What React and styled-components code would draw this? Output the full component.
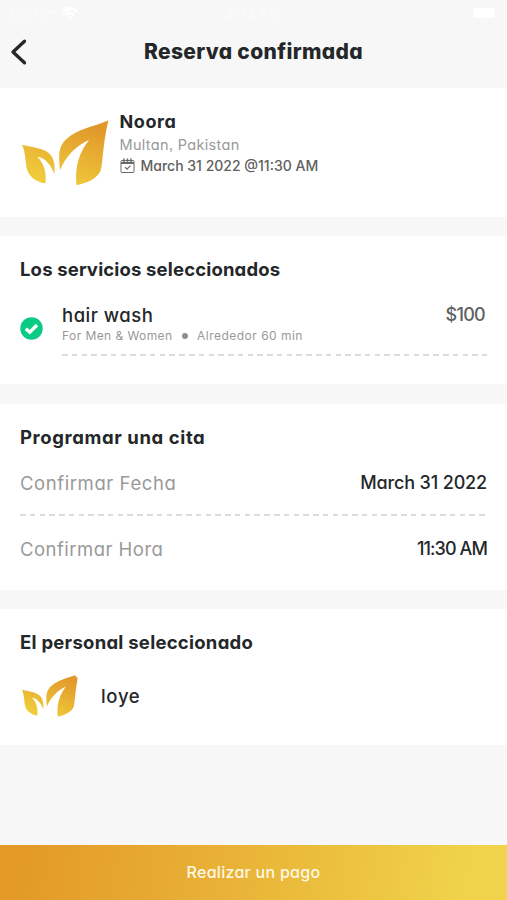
import React from "react";
import styled, { createGlobalStyle } from "styled-components";

const GlobalStyle = createGlobalStyle`
  * {
    box-sizing: border-box;
  }

  body {
    margin: 0;
    background: #f7f7f7;
    font-family: Inter, "Open Sans", sans-serif;
    font-feature-settings: "cv11", "ss03";
    color: #242729;
  }
`;

const Page = styled.div`
  display: flex;
  flex-direction: column;
  height: 900px;
`;

const StatusBar = styled.div`
  display: grid;
  grid-template-columns: 1fr auto 1fr;
  align-items: center;
  height: 26px;
  padding: 0 10px;
  font-size: 13px;
  font-weight: 500;
  letter-spacing: 0.4px;
  color: #fbfbfb;
`;

const Carrier = styled.div`
  display: flex;
  align-items: center;
  gap: 4px;
`;

const Battery = styled.div`
  justify-self: end;
  width: 22px;
  height: 10px;
  margin-right: 2px;
  border-radius: 2px;
  background: #fff;
`;

const Header = styled.header`
  display: grid;
  grid-template-columns: 40px 1fr 40px;
  align-items: center;
  height: 62px;
  padding-bottom: 10px;
`;

const BackIcon = styled.svg`
  width: 18px;
  height: 28px;
  margin-left: 10px;
`;

const Title = styled.h1`
  margin: 0;
  font-size: 21px;
  font-weight: 800;
  line-height: 26px;
  letter-spacing: 0.35px;
  text-align: center;
`;

const Card = styled.section`
  flex: none;
  height: ${props => props.$height}px;
  margin-bottom: ${props => props.$gap}px;
  padding: 21px 20px 0;
  background: #fff;
`;

const Salon = styled.div`
  display: flex;
  padding: 1px 0 0 2px;
`;

const SalonLogo = styled.svg`
  width: 87px;
  height: 66px;
  margin: 10px 10.5px 0 0;
`;

const Line = styled.div`
  font-size: ${props => props.$size || 18}px;
  font-weight: ${props => props.$weight || 500};
  line-height: ${props => props.$height || 24}px;
  letter-spacing: ${props => props.$spacing || 0}px;
  color: ${props => props.$color || "#242729"};
  white-space: nowrap;
`;

const DateLine = styled(Line)`
  display: flex;
  align-items: center;
  gap: 6px;
`;

const SectionTitle = styled.h2`
  margin: 0;
  font-size: 18.5px;
  font-weight: 700;
  line-height: 25px;
  letter-spacing: ${props => props.$spacing}px;
`;

const Service = styled.div`
  display: grid;
  grid-template-columns: 42px 1fr auto;
  margin-top: 21px;
`;

const Price = styled(Line)`
  margin-right: 2px;
`;

const CheckIcon = styled.svg`
  width: 23px;
  height: 23px;
  margin-top: 14px;
`;

const Details = styled.div`
  display: flex;
  align-items: center;
`;

const Dot = styled.span`
  width: 6px;
  height: 6px;
  margin: 0 9.5px 0 9px;
  border-radius: 50%;
  background: #8e8e8e;
`;

const Dashes = styled.div`
  height: 2px;
  margin: ${props => props.$margin};
  background: repeating-linear-gradient(
    to right,
    #dcdcdc 0 5.5px,
    transparent 5.5px 9.77px
  );
`;

const Row = styled.div`
  display: flex;
  justify-content: space-between;
  padding-top: ${props => props.$top || 0}px;
`;

const Staff = styled.div`
  display: flex;
  align-items: center;
  gap: 22px;
  margin: 20px 0 0 2px;
`;

const StaffLogo = styled.svg`
  width: 57px;
  height: 42px;
`;

const PayButton = styled.button`
  height: 55px;
  margin-top: auto;
  padding: 0 0 2px;
  border: 0;
  background: linear-gradient(100deg, #e39a27 5%, #e9b236 45%, #f0d34b 92%);
  font: 500 16px/24px Inter, sans-serif;
  font-feature-settings: inherit;
  letter-spacing: 0.28px;
  color: #fff8e6;
`;

const Leaves = ({ id }) => (
  <>
    <defs>
      <linearGradient
        id={id}
        gradientUnits="userSpaceOnUse"
        x1="200"
        y1="30"
        x2="130"
        y2="220"
      >
        <stop offset="0" stopColor="#e2992b" />
        <stop offset="1" stopColor="#f0cd3c" />
      </linearGradient>
    </defs>
    <g fill={`url(#${id})`}>
      <path d="M12 90C36 97 64 98 84 110C104 122 112 142 109 178C101 158 84 128 57 126C76 143 86 172 82 206C58 203 35 190 27 165C21 144 23 116 12 90Z" />
      <path d="M271 17C238 33 195 39 160 61C128 82 123 103 123 130C123 143 124 155 126 167C139 130 171 94 213 75C184 111 169 155 175 212C207 205 239 191 248 166C255 140 254 84 271 17Z" />
    </g>
  </>
);

export default function App() {
  return (
    <>
      <GlobalStyle />
      <Page>
        <StatusBar>
          <Carrier>
            Carrier
            <svg width="18" height="14" viewBox="0 0 18 14" fill="#fff">
              <path d="M1 5Q9-3 17 5L15 7Q9 1 3 7ZM4 8Q9 3 14 8L12 10Q9 7 6 10ZM7 11Q9 9 11 11L9 13Z" />
            </svg>
          </Carrier>
          <span>2:42 PM</span>
          <Battery />
        </StatusBar>

        <Header>
          <BackIcon viewBox="0 0 18 28" fill="none">
            <path
              d="M14.5 3.2L3 14L14.5 24.8"
              stroke="#242729"
              strokeWidth="3.3"
              strokeLinecap="round"
              strokeLinejoin="round"
            />
          </BackIcon>
          <Title>Reserva confirmada</Title>
        </Header>

        <Card $height={129} $gap={19}>
          <Salon>
            <SalonLogo viewBox="12 16 260 198">
              <Leaves id="salon" />
            </SalonLogo>
            <div>
              <Line $weight={700} $spacing={0.6}>
                Noora
              </Line>
              <Line
                $size={14.5}
                $weight={400}
                $height={21}
                $spacing={0.32}
                $color="#999"
              >
                Multan, Pakistan
              </Line>
              <DateLine $size={14} $height={21} $color="#606060">
                <svg
                  width="15"
                  height="15"
                  viewBox="0 0 15 15"
                  fill="none"
                  stroke="#686868"
                >
                  <rect x="1" y="2.5" width="13" height="12" rx="0.8" />
                  <path d="M1 5H14" strokeWidth="2" />
                  <path d="M4 .5V4M7.5 .5V4M11 .5V4" strokeWidth="1.5" />
                  <path d="M5 9.2L7 11.2L10.5 7.7" strokeWidth="1.2" />
                </svg>
                March 31 2022 @11:30 AM
              </DateLine>
            </div>
          </Salon>
        </Card>

        <Card $height={148} $gap={20}>
          <SectionTitle $spacing={0.16}>
            Los servicios seleccionados
          </SectionTitle>
          <Service>
            <CheckIcon viewBox="0 0 23 23">
              <circle cx="11.5" cy="11.5" r="11.2" fill="#0acb84" />
              <path
                d="M5.8 11.8L9.8 15.2L17 8"
                fill="none"
                stroke="#fff"
                strokeWidth="3.4"
              />
            </CheckIcon>
            <div>
              <Line $size={18.5} $weight={450} $spacing={0.5}>
                hair wash
              </Line>
              <Details>
                <Line
                  $size={12}
                  $weight={400}
                  $height={18}
                  $spacing={0.43}
                  $color="#999"
                >
                  For Men &amp; Women
                </Line>
                <Dot />
                <Line
                  $size={12}
                  $weight={400}
                  $height={18}
                  $spacing={0.48}
                  $color="#999"
                >
                  Alrededor 60 min
                </Line>
              </Details>
            </div>
            <Price $spacing={-0.7} $color="#606060">
              $100
            </Price>
          </Service>
          <Dashes $margin="9px 0 0 42px" />
        </Card>

        <Card $height={186} $gap={19}>
          <SectionTitle $spacing={0.6}>Programar una cita</SectionTitle>
          <Row $top={21}>
            <Line $size={18.5} $weight={400} $spacing={0.58} $color="#999">
              Confirmar Fecha
            </Line>
            <Line $spacing={-0.15}>March 31 2022</Line>
          </Row>
          <Dashes $margin="19px 0 21px" />
          <Row>
            <Line $size={18.5} $weight={400} $spacing={0.48} $color="#999">
              Confirmar Hora
            </Line>
            <Line $spacing={-0.9}>11:30 AM</Line>
          </Row>
        </Card>

        <Card $height={136} $gap={0}>
          <SectionTitle $spacing={0.26}>El personal seleccionado</SectionTitle>
          <Staff>
            <StaffLogo viewBox="12 23 260 190" preserveAspectRatio="none">
              <defs>
                <clipPath id="corner">
                  <path d="M12 23H252Q268 34 272 54V213H12Z" />
                </clipPath>
              </defs>
              <g clipPath="url(#corner)">
                <Leaves id="staff" />
              </g>
            </StaffLogo>
            <Line $size={18.5} $weight={450} $spacing={0.7}>
              loye
            </Line>
          </Staff>
        </Card>

        <PayButton>Realizar un pago</PayButton>
      </Page>
    </>
  );
}
